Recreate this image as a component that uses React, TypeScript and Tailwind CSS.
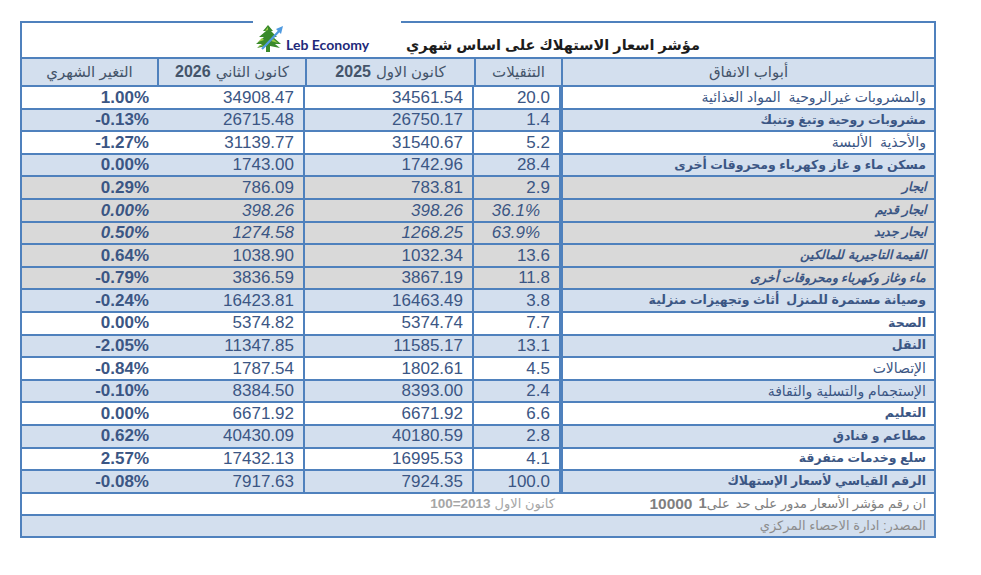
type Row = {
  cat: string;
  w: string;
  dec: string;
  jan: string;
  chg: string;
  bg: "white" | "blue" | "gray";
  catItalic?: boolean;
  allItalic?: boolean;
  light?: boolean;
};

const rows: Row[] = [
  { cat: "والمشروبات غيرالروحية  المواد الغذائية", w: "20.0", dec: "34561.54", jan: "34908.47", chg: "1.00%", bg: "white", light: true },
  { cat: "مشروبات روحية وتبغ وتنبك", w: "1.4", dec: "26750.17", jan: "26715.48", chg: "-0.13%", bg: "blue" },
  { cat: "والأحذية  الألبسة", w: "5.2", dec: "31540.67", jan: "31139.77", chg: "-1.27%", bg: "white", light: true },
  { cat: "مسكن ماء و غاز وكهرباء ومحروقات أخرى", w: "28.4", dec: "1742.96", jan: "1743.00", chg: "0.00%", bg: "blue" },
  { cat: "ايجار", w: "2.9", dec: "783.81", jan: "786.09", chg: "0.29%", bg: "gray", catItalic: true },
  { cat: "ايجار قديم", w: "36.1%", dec: "398.26", jan: "398.26", chg: "0.00%", bg: "gray", catItalic: true, allItalic: true },
  { cat: "ايجار جديد", w: "63.9%", dec: "1268.25", jan: "1274.58", chg: "0.50%", bg: "gray", catItalic: true, allItalic: true },
  { cat: "القيمة التاجيرية للمالكين", w: "13.6", dec: "1032.34", jan: "1038.90", chg: "0.64%", bg: "gray", catItalic: true },
  { cat: "ماء وغاز وكهرباء ومحروقات أخرى", w: "11.8", dec: "3867.19", jan: "3836.59", chg: "-0.79%", bg: "gray", catItalic: true },
  { cat: "وصيانة مستمرة للمنزل  أثاث وتجهيزات منزلية", w: "3.8", dec: "16463.49", jan: "16423.81", chg: "-0.24%", bg: "blue" },
  { cat: "الصحة", w: "7.7", dec: "5374.74", jan: "5374.82", chg: "0.00%", bg: "white" },
  { cat: "النقل", w: "13.1", dec: "11585.17", jan: "11347.85", chg: "-2.05%", bg: "blue" },
  { cat: "الإتصالات", w: "4.5", dec: "1802.61", jan: "1787.54", chg: "-0.84%", bg: "white", light: true },
  { cat: "الإستجمام والتسلية والثقافة", w: "2.4", dec: "8393.00", jan: "8384.50", chg: "-0.10%", bg: "blue", light: true },
  { cat: "التعليم", w: "6.6", dec: "6671.92", jan: "6671.92", chg: "0.00%", bg: "white" },
  { cat: "مطاعم و فنادق", w: "2.8", dec: "40180.59", jan: "40430.09", chg: "0.62%", bg: "blue" },
  { cat: "سلع وخدمات متفرقة", w: "4.1", dec: "16995.53", jan: "17432.13", chg: "2.57%", bg: "white" },
  { cat: "الرقم القياسي لأسعار الإستهلاك", w: "100.0", dec: "7924.35", jan: "7917.63", chg: "-0.08%", bg: "blue" },
];

const bgClass = {
  white: "bg-white",
  blue: "bg-[#d3dfee]",
  gray: "bg-[#d9d9d9]",
};

function CedarLogo() {
  return (
    <svg width="32" height="29" viewBox="0 0 32 29">
      <path d="M14 1 L9 7 L12 7 L5 13 L10 13 L2 20 L8 20 L3 24 L12 22 L12 28 L16 28 L16 22 L26 24 L21 20 L27 20 L19 13 L23 13 L17 7 L19 7 Z" fill="#3a8a2c" />
      <path d="M14 3 L11 7 L14 6 Z M8 14 L4 18 L10 16 Z M6 21 L4 23 L10 21 Z M19 15 L24 19 L17 17 Z" fill="#9ccc45" />
      <path d="M8 25 Q15 18 26 6" stroke="#4f9ae0" strokeWidth="2.2" fill="none" />
      <path d="M22 5 L29 2 L27 10 Z" fill="#4f9ae0" />
    </svg>
  );
}

export default function App() {
  return (
    <div className="min-h-screen bg-white pt-[21px] pl-[20px] font-['Liberation_Sans','DejaVu_Sans',sans-serif]">
      <div dir="rtl" className="w-[916px] border-2 border-[#4f81bd] text-[#3b5684]">
        {/* title */}
        <div className="h-[36px] border-b-2 border-[#4f81bd] flex items-start justify-center pr-[3px]">
          <div className="pt-[12px] text-[14.5px] font-bold text-[#1c1c1c] whitespace-nowrap">
            مؤشر اسعار الاستهلاك على اساس شهري
          </div>
          <div dir="ltr" className="w-[148px] h-[36px] -mt-[3px] mr-[5px] bg-white flex items-start pl-[1px] pt-[4px]">
            <CedarLogo />
            <span className="mt-[10px] text-[14px] font-bold text-[#1f2a7a] font-['Lato',sans-serif]">Leb Economy</span>
          </div>
        </div>

        {/* header */}
        <div className="h-[28px] border-b-2 border-[#4f81bd] bg-[#d3dfee] flex text-[#44546a] text-[15px]">
          <div className="w-[373px] border-l-2 border-[#4f81bd] flex items-center justify-center">أبواب الانفاق</div>
          <div className="w-[87px] border-l-2 border-[#4f81bd] flex items-center justify-center">التثقيلات</div>
          <div className="w-[169px] border-l-2 border-[#4f81bd] flex items-center justify-center">
            كانون الاول <span className="font-bold text-[16px] mr-[5px]">2025</span>
          </div>
          <div className="w-[148px] border-l-2 border-[#4f81bd] flex items-center justify-center">
            كانون الثاني <span className="font-bold text-[16px] mr-[5px]">2026</span>
          </div>
          <div className="flex-1 flex items-center justify-center">التغير الشهري</div>
        </div>

        {rows.map((r, i) => (
          <div key={i} className={`h-[22.6px] border-b-2 border-[#4f81bd] flex text-[17px] ${bgClass[r.bg]}`}>
            <div
              className={`w-[373px] border-l-2 border-[#4f81bd] flex items-center pr-[8px] whitespace-pre ${r.light ? "font-normal text-[14px]" : "font-bold text-[12.5px]"} ${r.catItalic ? "italic" : ""}`}
            >
              {r.cat}
            </div>
            <div
              dir="ltr"
              className={`w-[87px] border-r-2 border-[#4f81bd] flex items-center justify-end ${r.allItalic ? "italic pr-[19px]" : "pr-[9px]"}`}
            >
              {r.w}
            </div>
            <div
              dir="ltr"
              className={`w-[169px] border-r-2 border-[#4f81bd] flex items-center justify-end pr-[9px] ${r.allItalic ? "italic" : ""}`}
            >
              {r.dec}
            </div>
            <div
              dir="ltr"
              className={`w-[148px] border-r-2 border-[#4f81bd] flex items-center justify-end pr-[9px] ${r.allItalic ? "italic" : ""}`}
            >
              {r.jan}
            </div>
            <div
              dir="ltr"
              className={`flex-1 flex items-center justify-end pr-[8px] font-bold ${r.allItalic ? "italic" : ""}`}
            >
              {r.chg}
            </div>
          </div>
        ))}

        {/* notes */}
        <div className="h-[22px] border-b-2 border-[#4f81bd] bg-white flex">
          <div className="w-[378px] flex items-center gap-[6px] pr-[8px] text-[13px] text-[#7f7f7f] whitespace-nowrap">
            <span>ان رقم مؤشر الأسعار مدور على حد</span>
            <span dir="ltr" className="flex items-center">
              <span className="font-bold text-[15px]">1</span>
              <span>على</span>
            </span>
            <span className="font-bold text-[15.5px]">10000</span>
          </div>
          <div className="flex-1 flex items-center pr-[1px] text-[13px] text-[#a6a6a6] whitespace-nowrap">
            كانون الاول <span className="font-bold text-[13.5px] mr-[4px]">2013=100</span>
          </div>
        </div>
        <div className="h-[20px] bg-[#d3dfee] flex items-center pr-[8px] text-[13px] text-[#8c8c8c]">
          المصدر: ادارة الاحصاء المركزي
        </div>
      </div>
    </div>
  );
}
